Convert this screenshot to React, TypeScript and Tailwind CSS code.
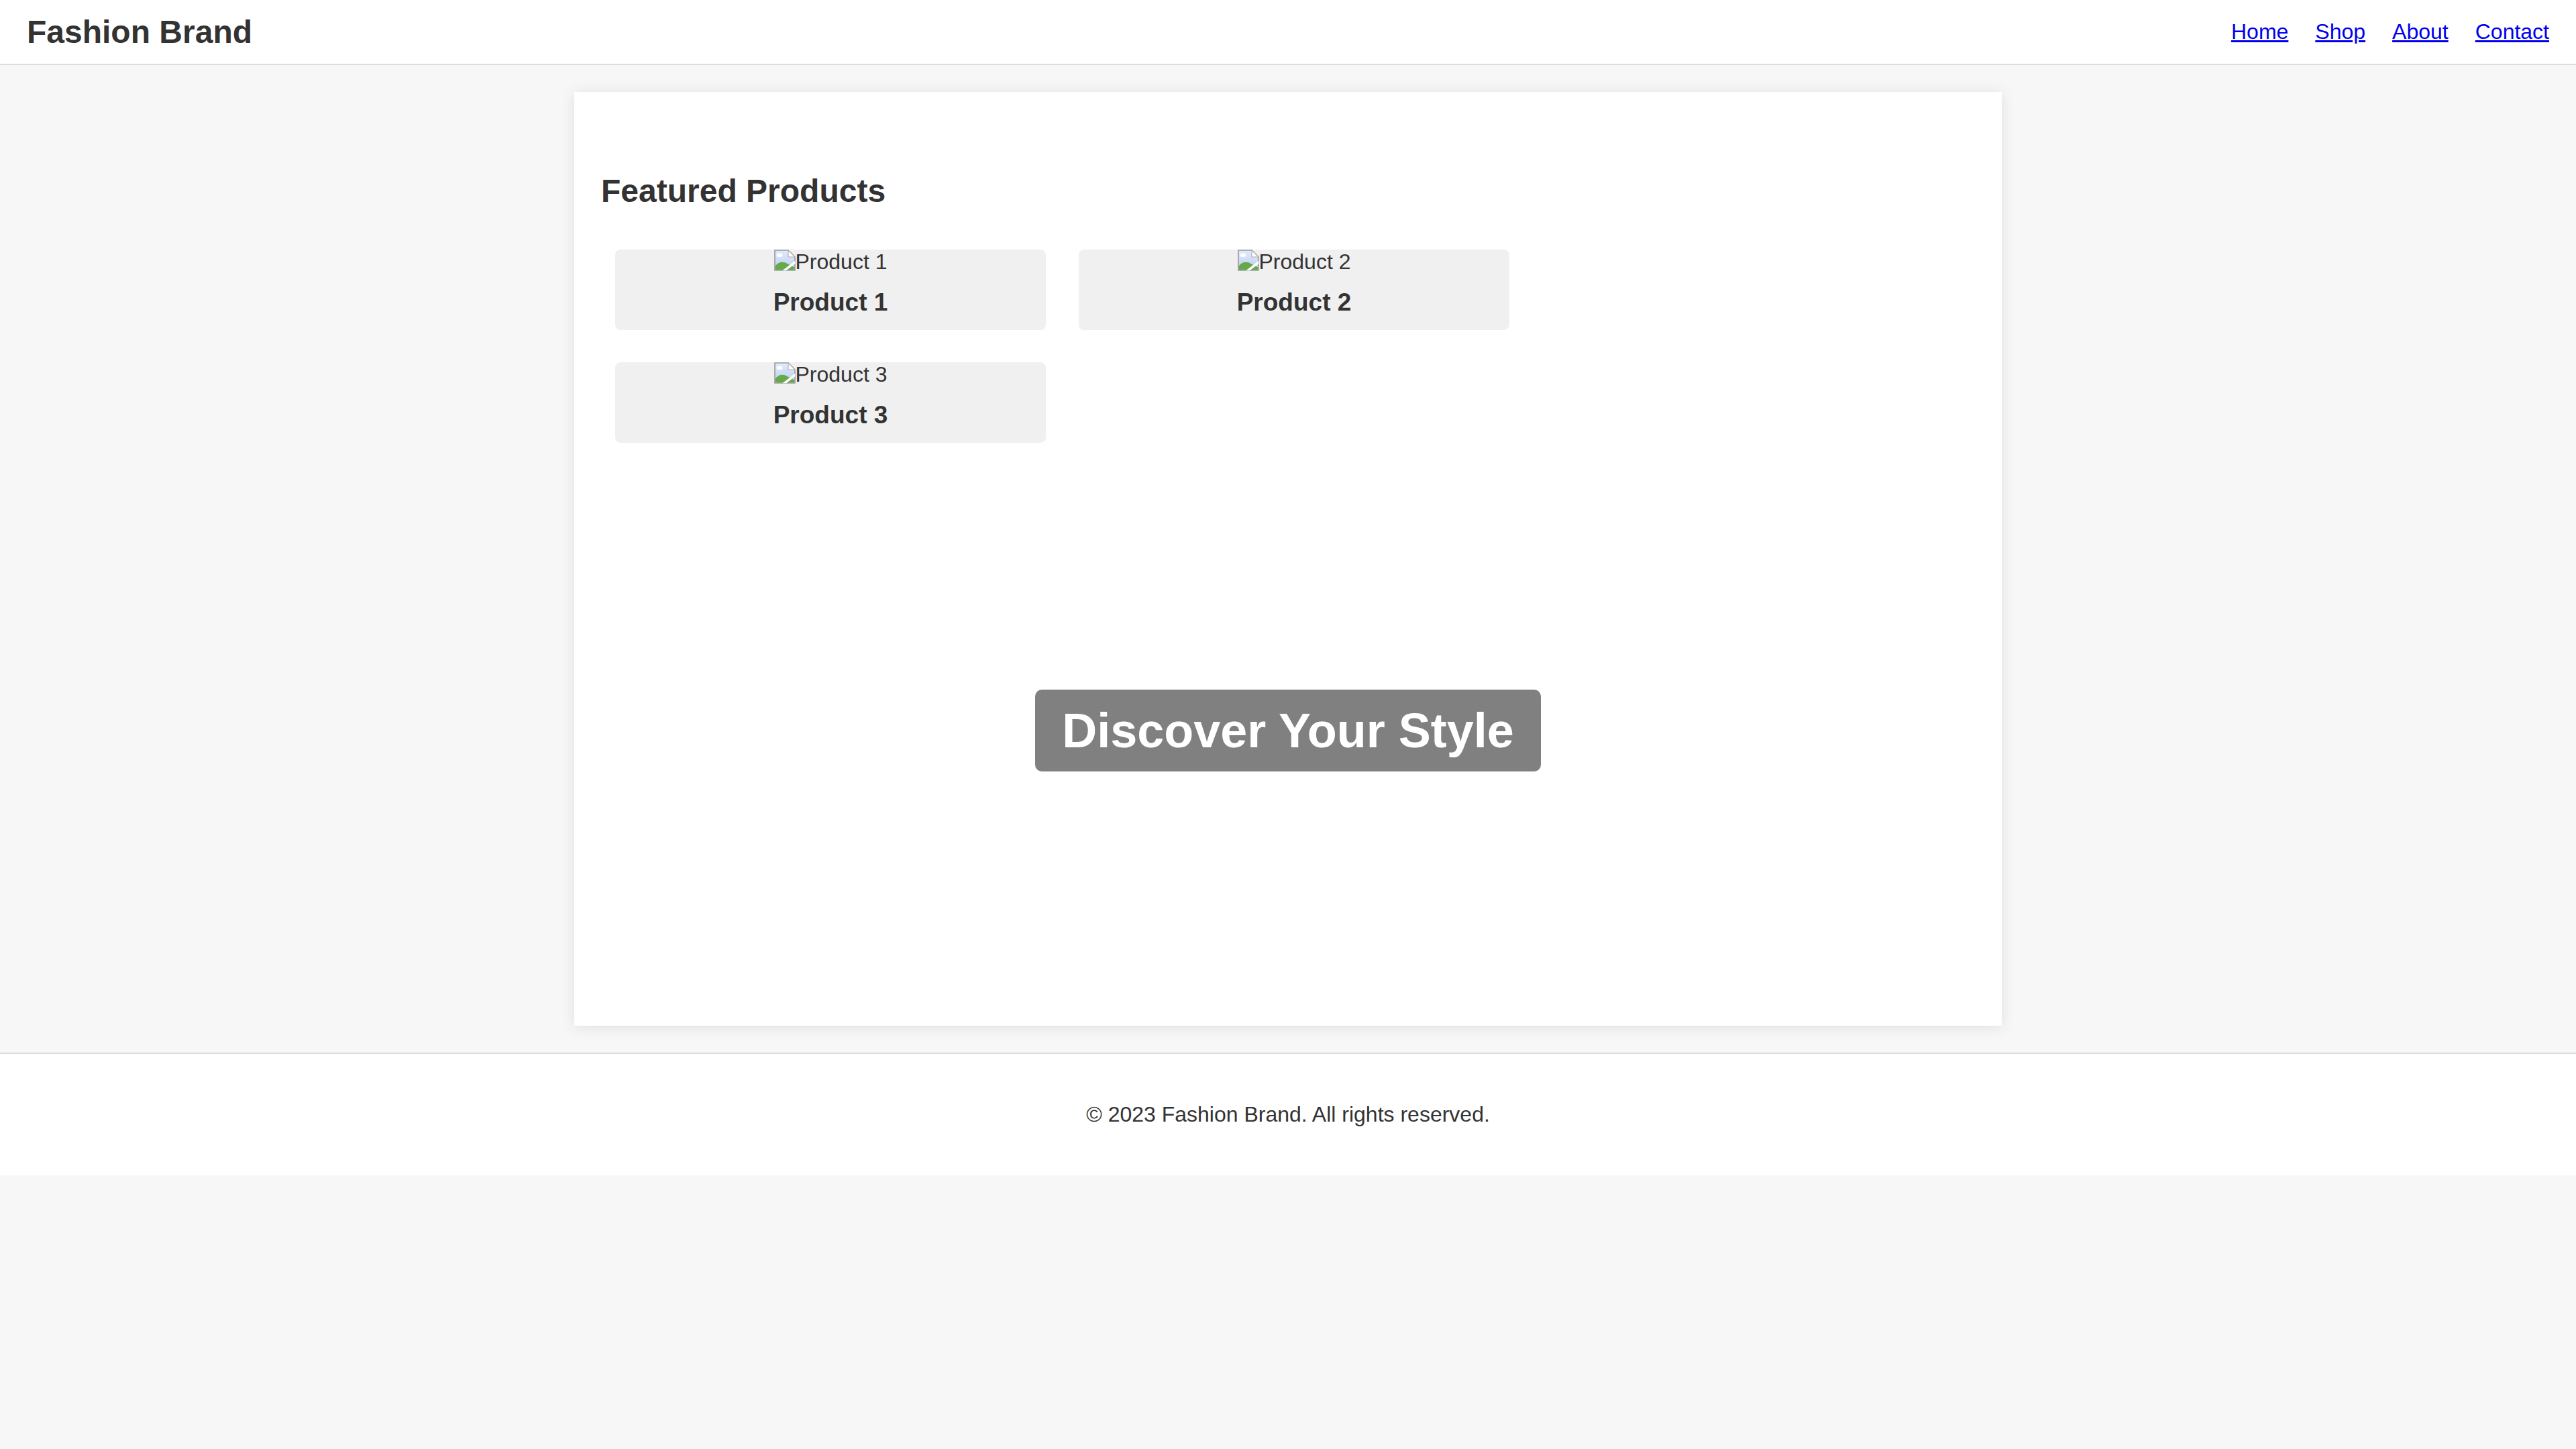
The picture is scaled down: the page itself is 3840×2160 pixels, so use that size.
import React from "react";

const BrokenImage = () => (
    <svg width="32" height="32" viewBox="0 0 16 16" className="shrink-0">
        <defs>
            <linearGradient id="sky" x1="0" y1="0" x2="0" y2="1">
                <stop offset="0" stopColor="#e2ebfc" />
                <stop offset="1" stopColor="#b9cdf2" />
            </linearGradient>
        </defs>
        <path d="M0.5 0.5H10.5L15.5 5.5V15.5H0.5Z" fill="url(#sky)" stroke="#9a9a9a" strokeWidth="0.8" />
        <path d="M10.5 0.5V5.5H15.5Z" fill="#ffffff" stroke="#b0b0b0" strokeWidth="0.6" />
        <ellipse cx="4" cy="4.2" rx="2.2" ry="1.3" fill="#ffffff" />
        <path d="M0.9 15.1V12.2C3 9 7 8.6 10 10.6L15.1 13.2V15.1Z" fill="#67a849" />
        <path d="M6.2 15.6L15.6 8.4V10.6L9 15.6Z" fill="#ffffff" />
    </svg>
);

const products = ["Product 1", "Product 2", "Product 3"];

export default function App() {
    return (
        <div className="min-h-screen w-full bg-[#f7f7f7] text-[#333] font-['Liberation_Sans',Arial,sans-serif]">
            <header className="w-full bg-white border-b-2 border-[#ddd] px-[40px] py-[20px] flex justify-between items-center">
                <h1 className="text-[48px] leading-[55px] font-bold">Fashion Brand</h1>
                <nav className="flex items-center gap-[40px] text-[32px] leading-[37px]">
                    <a href="#" className="text-[#0000ee] underline">Home</a>
                    <a href="#" className="text-[#0000ee] underline">Shop</a>
                    <a href="#" className="text-[#0000ee] underline">About</a>
                    <a href="#" className="text-[#0000ee] underline">Contact</a>
                </nav>
            </header>

            <main className="mx-auto my-[40px] w-[2128px] bg-white p-[40px] shadow-[0_2px_20px_rgba(0,0,0,0.1)]">
                <section className="pt-[40px] pb-[29px]">
                    <h2 className="text-[48px] leading-[55px] font-bold my-[40px]">Featured Products</h2>
                    <div className="grid grid-cols-[642px_642px] gap-x-[49px] gap-y-[48px] pt-[20px] pl-[21px]">
                        {products.map((p) => (
                            <div key={p} className="h-[120px] bg-[#f0f0f0] rounded-[8px] flex flex-col items-center">
                                <div className="flex items-start text-[32px] leading-[37px]">
                                    <BrokenImage />
                                    <span>{p}</span>
                                </div>
                                <h3 className="text-[37px] leading-[43px] font-bold my-[20px]">{p}</h3>
                            </div>
                        ))}
                    </div>
                </section>

                <section className="h-[800px] flex items-center justify-center">
                    <h2 className="bg-[#808080] text-white text-[72px] leading-[82px] font-bold px-[40px] py-[20px] rounded-[10px]">
                        Discover Your Style
                    </h2>
                </section>
            </main>

            <footer className="w-full bg-white border-t-2 border-[#ddd] py-[40px] text-center">
                <p className="text-[32px] leading-[37px] my-[32px]">© 2023 Fashion Brand. All rights reserved.</p>
            </footer>
        </div>
    );
}
